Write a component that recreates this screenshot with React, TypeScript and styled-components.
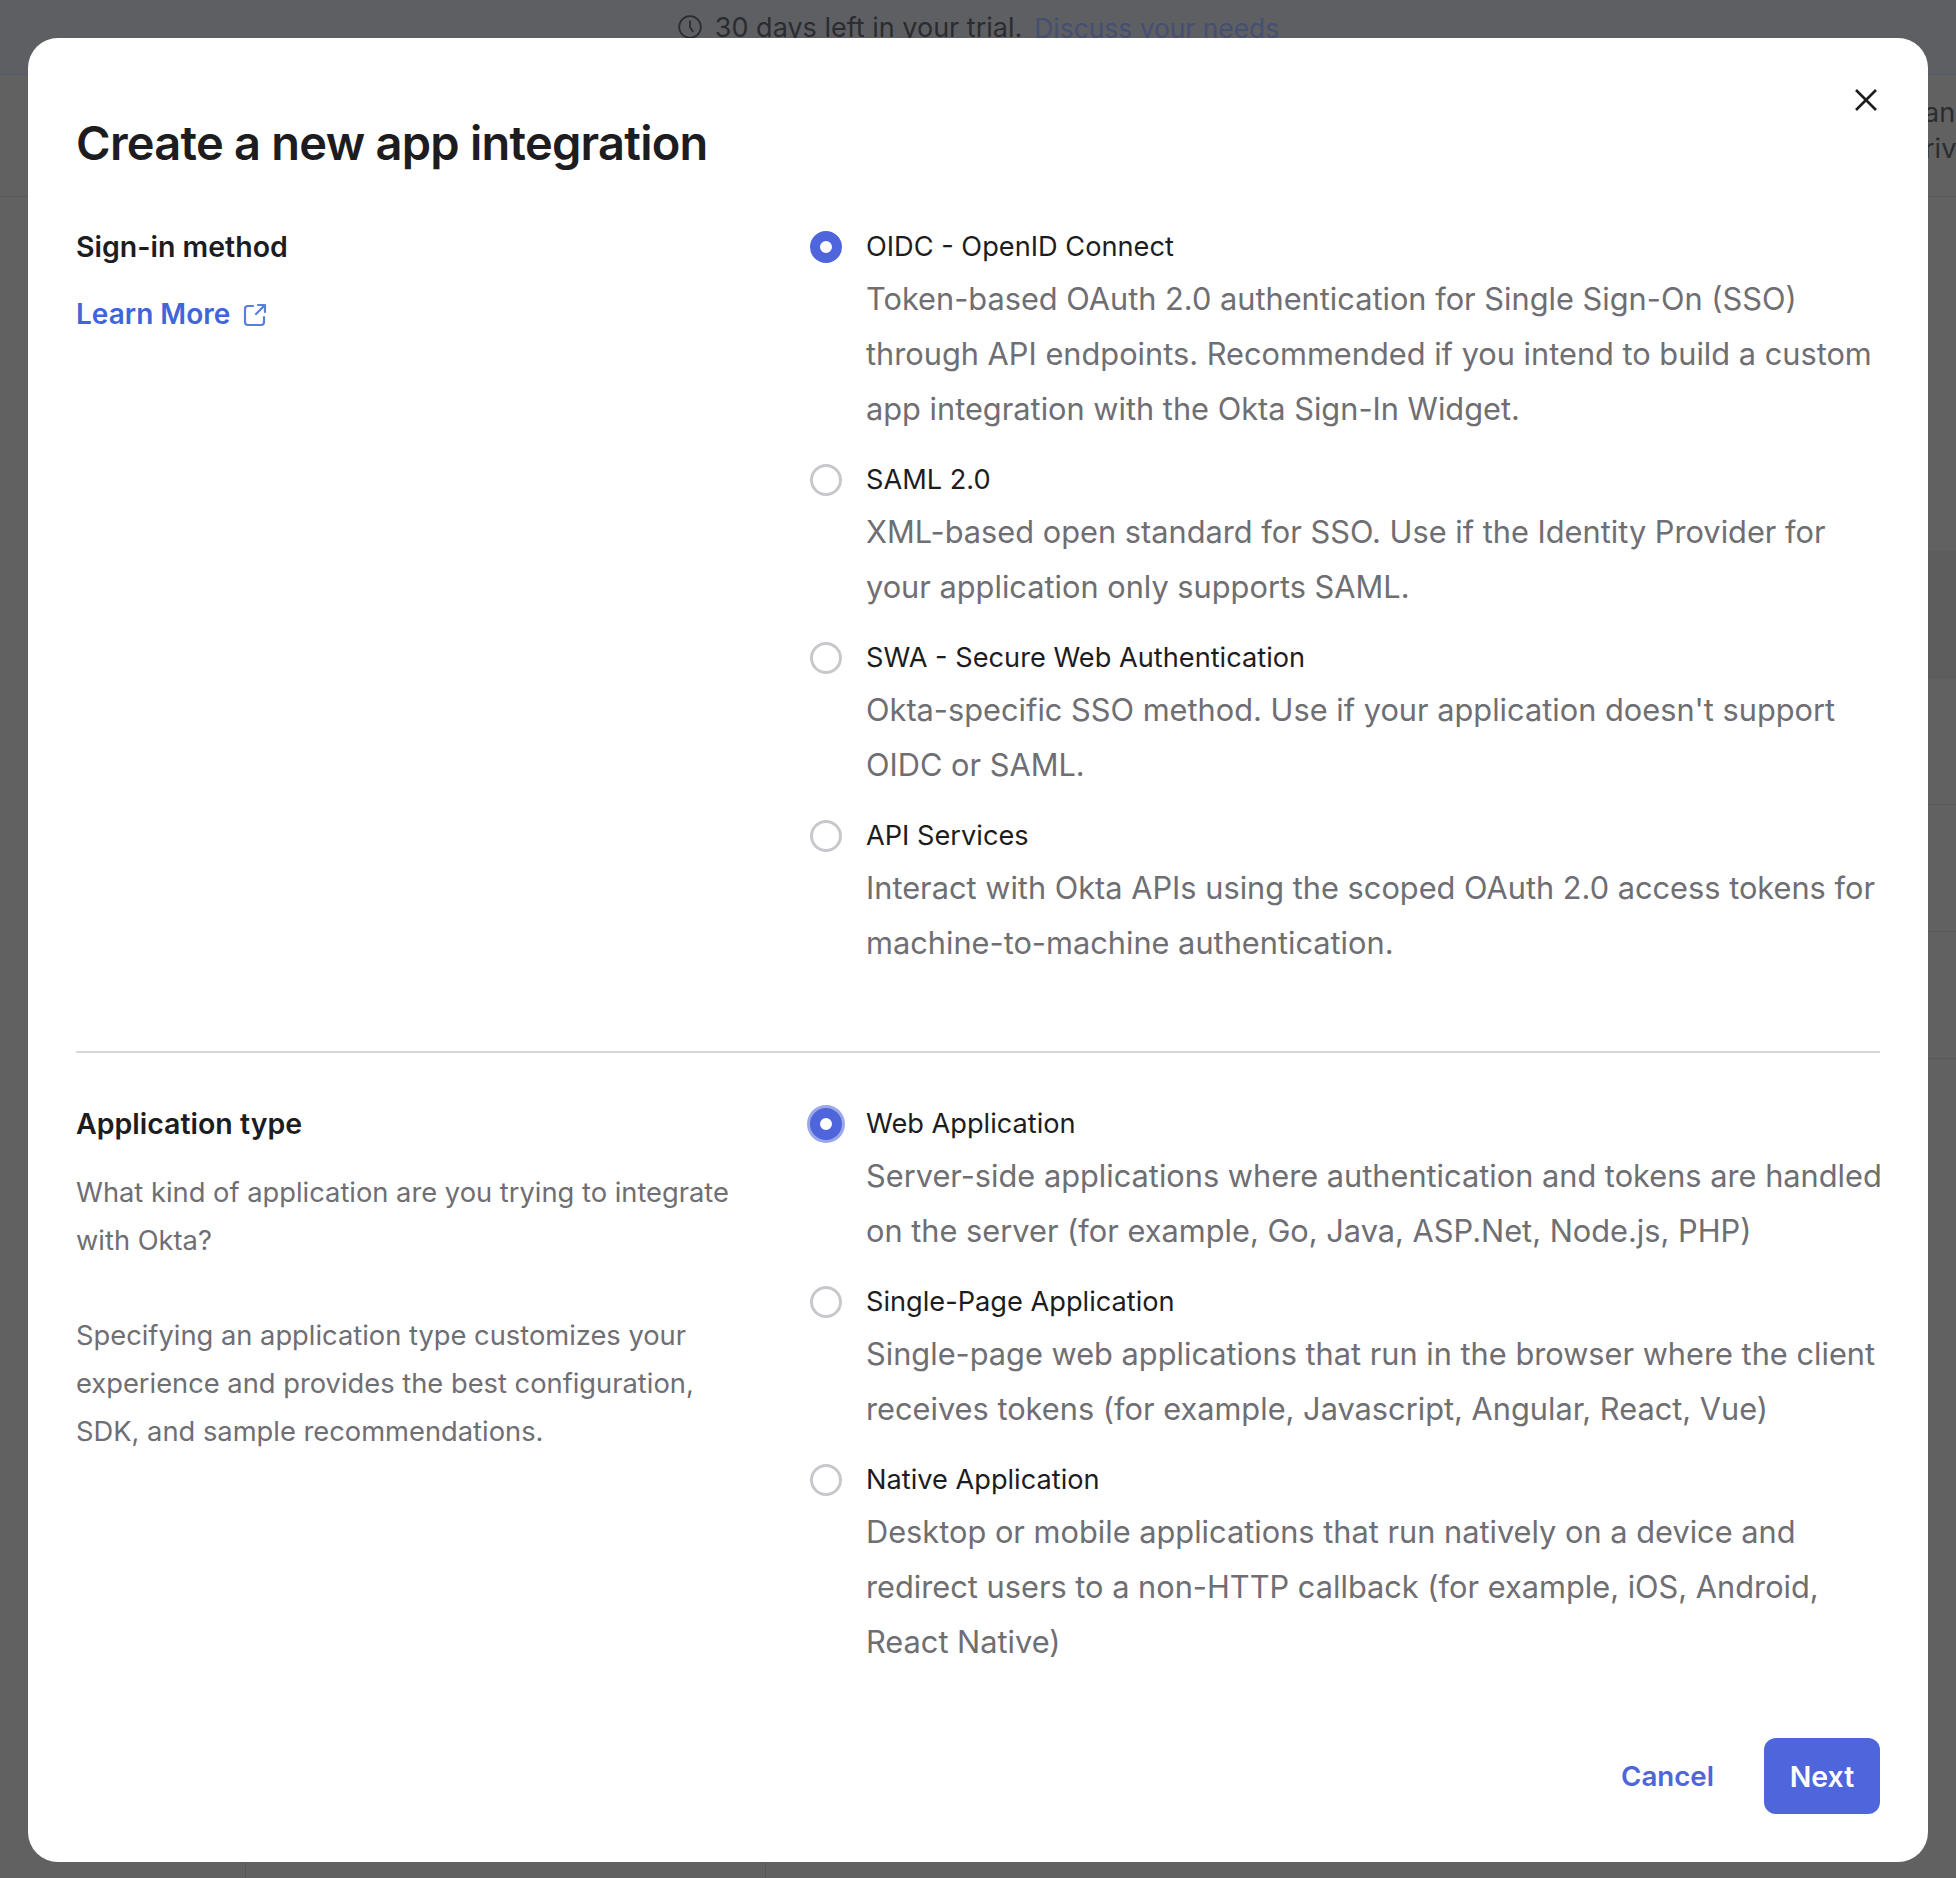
import React from "react";
import styled, {createGlobalStyle} from "styled-components";

const GlobalStyle = createGlobalStyle`
    html, body {
        margin: 0;
        padding: 0;
        background: #616161;
    }
    * {
        box-sizing: border-box;
    }
`
const Page = styled.div<{}>`
    position: relative;
    width: 1956px;
    height: 1878px;
    overflow: hidden;
    background: #616161;
    font-family: "Inter", "Liberation Sans", sans-serif;
    display: flex;
    flex-direction: column;
`
const Banner = styled.div<{}>`
    height: 75px;
    flex: none;
    border-bottom: 1px solid #55586e;
    background: #5e5f63;
    display: flex;
    justify-content: center;
    align-items: flex-start;
    gap: 12px;
    padding: 9px 0 0 0;
    font-size: 27px;
    line-height: 38px;
    color: #2b2c2f;
    white-space: nowrap;

    svg {
        margin-top: 5px;
    }
`
const BannerLink = styled.span<{}>`
    color: #454f72;
    font-size: 26.4px;
`
const PageHead = styled.div<{}>`
    height: 122px;
    flex: none;
    border-bottom: 1px solid #58585a;
    padding: 20px 0 0 1924px;
    font-size: 27px;
    line-height: 36px;
    color: #2b2c2f;
    white-space: nowrap;
`
const BackRows = styled.div<{}>`
    width: 1000px;
    margin: 354px 0 0 auto;
    flex: none;
`
const BackRow = styled.div<{$shaded?: boolean}>`
    height: 127px;
    border-bottom: 1px solid #595959;
    background: ${({$shaded}) => $shaded ? "#5d5d5d" : "transparent"};
`
const BackCells = styled.div<{}>`
    margin-top: auto;
    height: 16px;
    flex: none;
    display: flex;
    padding-left: 245px;
`
const BackCell = styled.div<{}>`
    width: 520px;
    border-left: 1px solid #575757;
`
const Modal = styled.div<{}>`
    position: absolute;
    left: 28px;
    top: 38px;
    width: 1900px;
    height: 1824px;
    background: #ffffff;
    border-radius: 30px;
    padding: 76px 48px 48px;
    display: flex;
    flex-direction: column;
`
const CloseButton = styled.button<{}>`
    position: absolute;
    right: 47px;
    top: 47px;
    width: 30px;
    height: 30px;
    padding: 0;
    border: 0;
    background: none;
    color: #1d1d21;
`
const Title = styled.h1<{}>`
    margin: 0 0 57px 0;
    font-size: 47px;
    line-height: 58px;
    font-weight: 600;
    letter-spacing: -0.75px;
    color: #1d1d21;
`
const Section = styled.section<{}>`
    display: grid;
    grid-template-columns: 730px 1fr;
`
const Side = styled.div<{}>`
    display: flex;
    flex-direction: column;
`
const SideTitle = styled.h2<{}>`
    margin: 0;
    font-size: 28.5px;
    line-height: 35px;
    font-weight: 600;
    color: #1d1d21;
`
const LearnMore = styled.a<{}>`
    display: flex;
    align-items: center;
    gap: 12px;
    margin-top: 32px;
    font-size: 28px;
    line-height: 36px;
    font-weight: 600;
    color: #3f66d8;

    svg {
        color: #5a7de0;
    }
`
const SideText = styled.p<{}>`
    margin: 28px 0 0 0;
    width: 680px;
    font-size: 27.3px;
    line-height: 48px;
    color: #6e6e73;

    & + & {
        margin-top: 47px;
    }
`
const Options = styled.div<{}>`
    display: flex;
    flex-direction: column;
`
const Option = styled.div<{}>`
    display: grid;
    grid-template-columns: 32px 1fr;
    column-gap: 24px;
    margin-left: 4px;
    margin-bottom: 26px;

    &:last-child {
        margin-bottom: 0;
    }
`
const Radio = styled.span<{$checked?: boolean, $focused?: boolean}>`
    width: 32px;
    height: 32px;
    margin-top: 2px;
    border-radius: 50%;
    border: ${({$checked}) => $checked ? "10px solid #4f65db" : "3px solid #c8c8cc"};
    background: #ffffff;
    box-shadow: ${({$focused}) => $focused ? "0 0 0 3px #9aa7ea" : "none"};
`
const OptionLabel = styled.div<{}>`
    font-size: 27.2px;
    line-height: 36px;
    color: #1d1d21;
`
const OptionText = styled.div<{}>`
    grid-column: 2;
    margin-top: 6px;
    font-size: 30.75px;
    line-height: 55px;
    color: #6e6e73;
    white-space: nowrap;
`
const Divider = styled.hr<{}>`
    margin: 81px 0 53px 0;
    border: 0;
    border-top: 2px solid #d7d7dc;
`
const Footer = styled.div<{}>`
    margin-top: auto;
    display: flex;
    justify-content: flex-end;
    align-items: center;
    gap: 50px;
`
const CancelButton = styled.button<{}>`
    padding: 0;
    border: 0;
    background: none;
    font-family: inherit;
    font-size: 27.7px;
    font-weight: 600;
    color: #4f65db;
`
const NextButton = styled.button<{}>`
    width: 116px;
    height: 76px;
    padding: 0;
    border: 0;
    border-radius: 12px;
    background: #4f65db;
    font-family: inherit;
    font-size: 28.4px;
    font-weight: 600;
    color: #ffffff;
`

type OptionItem = {label: string, text: string[], checked?: boolean, focused?: boolean}

const signInOptions: OptionItem[] = [
    {
        label: "OIDC - OpenID Connect",
        text: ["Token-based OAuth 2.0 authentication for Single Sign-On (SSO)", "through API endpoints. Recommended if you intend to build a custom", "app integration with the Okta Sign-In Widget."],
        checked: true,
    },
    {
        label: "SAML 2.0",
        text: ["XML-based open standard for SSO. Use if the Identity Provider for", "your application only supports SAML."],
    },
    {
        label: "SWA - Secure Web Authentication",
        text: ["Okta-specific SSO method. Use if your application doesn't support", "OIDC or SAML."],
    },
    {
        label: "API Services",
        text: ["Interact with Okta APIs using the scoped OAuth 2.0 access tokens for", "machine-to-machine authentication."],
    },
]

const appTypeOptions: OptionItem[] = [
    {
        label: "Web Application",
        text: ["Server-side applications where authentication and tokens are handled", "on the server (for example, Go, Java, ASP.Net, Node.js, PHP)"],
        checked: true,
        focused: true,
    },
    {
        label: "Single-Page Application",
        text: ["Single-page web applications that run in the browser where the client", "receives tokens (for example, Javascript, Angular, React, Vue)"],
    },
    {
        label: "Native Application",
        text: ["Desktop or mobile applications that run natively on a device and", "redirect users to a non-HTTP callback (for example, iOS, Android,", "React Native)"],
    },
]

function OptionList({items}: {items: OptionItem[]}) {
    return (
        <Options>
            {items.map((item) => (
                <Option key={item.label}>
                    <Radio $checked={item.checked} $focused={item.focused}/>
                    <OptionLabel>{item.label}</OptionLabel>
                    <OptionText>
                        {item.text.map((line) => <div key={line}>{line}</div>)}
                    </OptionText>
                </Option>
            ))}
        </Options>
    )
}

function App() {
    return (
        <Page>
            <GlobalStyle/>
            <Banner>
                <svg width="26" height="26" viewBox="0 0 24 24" fill="none" stroke="#2b2c2f" strokeWidth="1.6">
                    <circle cx="12" cy="12" r="10"/>
                    <path d="M12 6v6.5l3 4"/>
                </svg>
                <span>30 days left in your trial.</span>
                <BannerLink>Discuss your needs</BannerLink>
            </Banner>
            <PageHead>
                <div>an</div>
                <div>riv</div>
            </PageHead>
            <BackRows>
                <BackRow $shaded/>
                <BackRow/>
                <BackRow/>
                <BackRow/>
            </BackRows>
            <BackCells>
                <BackCell/>
                <BackCell/>
            </BackCells>
            <Modal>
                <CloseButton aria-label="Close">
                    <svg width="30" height="30" viewBox="0 0 30 30" fill="none" stroke="currentColor" strokeWidth="2.6">
                        <path d="M5 5l20 20M25 5L5 25"/>
                    </svg>
                </CloseButton>
                <Title>Create a new app integration</Title>
                <Section>
                    <Side>
                        <SideTitle>Sign-in method</SideTitle>
                        <LearnMore>
                            Learn More
                            <svg width="27" height="27" viewBox="0 0 27 27" fill="none" stroke="currentColor" strokeWidth="2.2" strokeLinecap="round" strokeLinejoin="round">
                                <path d="M11 5H6a3 3 0 0 0-3 3v13a3 3 0 0 0 3 3h13a3 3 0 0 0 3-3v-5"/>
                                <path d="M16 4h7v7M23 4l-9 9"/>
                            </svg>
                        </LearnMore>
                    </Side>
                    <OptionList items={signInOptions}/>
                </Section>
                <Divider/>
                <Section>
                    <Side>
                        <SideTitle>Application type</SideTitle>
                        <SideText>What kind of application are you trying to integrate with Okta?</SideText>
                        <SideText>Specifying an application type customizes your experience and provides the best configuration, SDK, and sample recommendations.</SideText>
                    </Side>
                    <OptionList items={appTypeOptions}/>
                </Section>
                <Footer>
                    <CancelButton>Cancel</CancelButton>
                    <NextButton>Next</NextButton>
                </Footer>
            </Modal>
        </Page>
    )
}

export default App;
